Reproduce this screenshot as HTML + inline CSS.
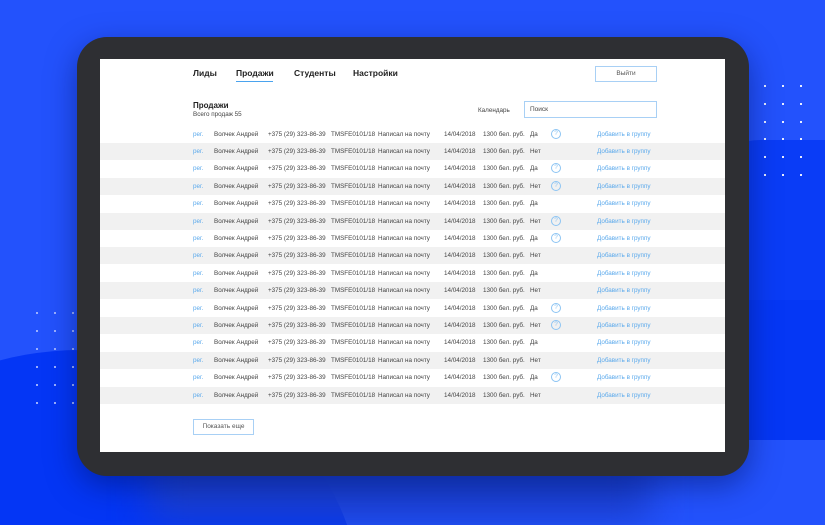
<!DOCTYPE html>
<html style="width:825px;height:525px;overflow:hidden"><head><meta charset="utf-8"><style>
*{margin:0;padding:0;box-sizing:border-box}
body{width:825px;height:525px;overflow:hidden;background:#2352fc;font-family:"Liberation Sans",sans-serif;position:relative}
.wrap{position:absolute;left:0;top:0;width:825px;height:525px;overflow:hidden}
.full{position:absolute;left:0;top:0;width:825px;height:525px}
.bg1{background:#0436f5;clip-path:ellipse(280px 250px at 80px 600px)}
.bg2{background:#0a3cf6;clip-path:inset(140px 0 85px 700px round 60px 0 0 60px)}
.bg3{background:#0537f5;clip-path:inset(300px 0 85px 740px)}
.bg4{position:absolute;left:150px;top:445px;width:500px;height:75px;background:#1a3fd0;filter:blur(18px)}
.dot{position:absolute;width:2px;height:2px;background:#fff;opacity:.9}
.dotl{position:absolute;width:2px;height:2px;background:#9bb0ff}
.tab{position:absolute;left:77px;top:37px;width:672px;height:439px;background:#2e2f33;border-radius:30px;box-shadow:0 10px 30px rgba(0,20,100,.5)}
.scr{position:absolute;left:100px;top:59px;width:625px;height:393px;background:#fff;overflow:hidden}
.nav{position:absolute;top:9px;font-size:8.5px;font-weight:bold;color:#222}
.ul{position:absolute;left:136px;top:22px;width:37px;height:1px;background:#4aa3ee}
.btn{position:absolute;border:1px solid #a8d0f5;font-size:6.5px;color:#555;text-align:center}
.row{position:absolute;left:0;width:625px;height:17px;font-size:6.3px;color:#444}
.row.g{background:#f1f1f1}
.row span{position:absolute;top:5px;white-space:nowrap}
.q{position:absolute;top:3px;left:451px;width:10px;height:10px;border:1px solid #8cc4f3;border-radius:50%;color:#8cc4f3;font-size:6.5px;text-align:center;line-height:8px}
.b{color:#5aa9ec}
</style></head><body>
<div class="wrap">
<div class="full bg1"></div><div class="full bg2"></div><div class="full bg3"></div><div class="bg4"></div>
<div id="dots"></div>
<div class="tab"></div>
<div class="scr">
<div class="nav" style="left:93px">Лиды</div>
<div class="nav" style="left:136px">Продажи</div>
<div class="nav" style="left:194px">Студенты</div>
<div class="nav" style="left:253px">Настройки</div>
<div class="ul"></div>
<div class="btn" style="left:495px;top:7px;width:62px;height:16px;line-height:14px">Выйти</div>
<div style="position:absolute;left:93px;top:42px;font-size:8px;font-weight:bold;color:#222">Продажи</div>
<div style="position:absolute;left:93px;top:52px;font-size:6.3px;color:#444">Всего продаж 55</div>
<div style="position:absolute;left:378px;top:48px;font-size:6.3px;color:#444">Календарь</div>
<div class="btn" style="left:424px;top:42px;width:133px;height:17px;text-align:left;padding-left:5px;line-height:15px;color:#444">Поиск</div>
<div id="rows"></div>
<div class="btn" style="left:93px;top:360px;width:61px;height:16px;line-height:14px">Показать еще</div>
</div>
</div>
<script>
(function(){
var d=document.getElementById('dots'),h='';
[764,782,800].forEach(function(x){for(var i=0;i<6;i++)h+='<div class="dot" style="left:'+x+'px;top:'+(85+i*17.8)+'px"></div>';});
[36,54,72].forEach(function(x){for(var i=0;i<6;i++)h+='<div class="dotl" style="left:'+x+'px;top:'+(312+i*18)+'px"></div>';});
d.innerHTML=h;
var q=[1,3,4,6,7,11,12,15],r='';
for(var i=1;i<=16;i++){
var yy=66.5+(i-1)*17.4;
r+='<div class="row'+(i%2==0?' g':'')+'" style="top:'+yy+'px"><span class="b" style="left:93px">рег.</span><span style="left:114px">Волчек Андрей</span><span style="left:168px">+375 (29) 323-86-39</span><span style="left:231px">TMSFE0101/18</span><span style="left:278px">Написал на почту</span><span style="left:344px">14/04/2018</span><span style="left:383px">1300 бел. руб.</span><span style="left:430px">'+(i%2?'Да':'Нет')+'</span>'+(q.indexOf(i)>=0?'<div class="q">?</div>':'')+'<span class="b" style="left:497px">Добавить в группу</span></div>';}
document.getElementById('rows').innerHTML=r;
})();
</script>
</body></html>
